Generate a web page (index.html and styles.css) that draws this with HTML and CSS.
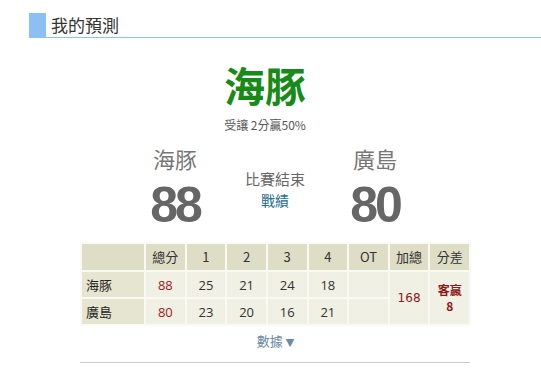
FILE: index.html
```html
<!DOCTYPE html>
<html lang="zh-Hant">
<head>
<meta charset="utf-8">
<title>我的預測</title>
<link rel="stylesheet" href="styles.css">
</head>
<body>
<div class="head">
  <span class="head-mark"></span>
  <span class="head-title">我的預測</span>
</div>

<div class="pick">
  <div class="pick-team">海豚</div>
  <div class="pick-note">受讓 2分贏50%</div>
</div>

<div class="board">
  <div class="team">
    <div class="team-name">海豚</div>
    <div class="team-score">88</div>
  </div>
  <div class="status">
    <div class="status-text">比賽結束</div>
    <a class="status-link">戰績</a>
  </div>
  <div class="team">
    <div class="team-name">廣島</div>
    <div class="team-score">80</div>
  </div>
</div>

<table class="scores">
  <tr class="hrow">
    <th class="c-name"></th>
    <th>總分</th>
    <th>1</th>
    <th>2</th>
    <th>3</th>
    <th>4</th>
    <th>OT</th>
    <th>加總</th>
    <th>分差</th>
  </tr>
  <tr class="brow">
    <td class="c-name">海豚</td>
    <td class="red">88</td>
    <td>25</td>
    <td>21</td>
    <td>24</td>
    <td>18</td>
    <td></td>
    <td class="sum" rowspan="2">168</td>
    <td class="diff" rowspan="2"><span class="diff-a">客贏</span><span class="diff-b">8</span></td>
  </tr>
  <tr class="brow">
    <td class="c-name">廣島</td>
    <td class="red">80</td>
    <td>23</td>
    <td>20</td>
    <td>16</td>
    <td>21</td>
    <td></td>
  </tr>
</table>

<div class="more">數據 <span class="more-arrow">▼</span></div>
<div class="rule"></div>
</body>
</html>
```

FILE: styles.css
```css
body {
  margin: 0;
  background: #fff;
  font-family: "Noto Sans CJK TC", "Noto Sans", sans-serif;
  color: #333;
}

.head {
  display: flex;
  align-items: stretch;
  margin: 13px 0 0 29px;
  height: 24px;
  border-bottom: 1px solid #8cc4e4;
}
.head-mark {
  width: 17px;
  background: #8cc0f4;
}
.head-title {
  margin-left: 5px;
  font-size: 17px;
  line-height: 24px;
  color: #333;
}

.pick {
  margin: 24px 0 0 29px;
  width: 472px;
  text-align: center;
}
.pick-team {
  font-size: 41px;
  line-height: 44px;
  font-weight: bold;
  color: #178a17;
}
.pick-note {
  margin-top: 11px;
  font-size: 12px;
  line-height: 16px;
  color: #555;
}

.board {
  display: flex;
  width: 300px;
  margin: 12px 0 0 125px;
}
.team {
  width: 100px;
  text-align: center;
}
.team-name {
  font-size: 22px;
  line-height: 26px;
  color: #777;
}
.team-score {
  margin-top: 9px;
  font-family: "Liberation Sans", Arial, sans-serif;
  font-weight: bold;
  font-size: 50px;
  line-height: 50px;
  letter-spacing: -3px;
  color: #666;
}
.status {
  width: 100px;
  padding-top: 24px;
  text-align: center;
}
.status-text {
  font-size: 15px;
  line-height: 20px;
  color: #666;
}
.status-link {
  display: block;
  margin-top: 2px;
  font-size: 14px;
  line-height: 18px;
  color: #1f6e8e;
}

.scores {
  margin: 12px 0 0 80px;
  width: 391px;
  border-collapse: collapse;
  border: 1px solid #c6c6bc;
  font-family: "Open Sans", "Noto Sans CJK TC", sans-serif;
  font-size: 13px;
  line-height: 16px;
  color: #333;
  table-layout: fixed;
}
.scores .hrow {
  height: 28px;
}
.scores .brow {
  height: 27px;
}
.scores th,
.scores td {
  border: 2px solid #fafaf4;
  text-align: center;
  padding: 0;
  font-weight: normal;
  background: #f0f0e4;
}
.scores th {
  background: #deddc6;
  font-family: "Noto Sans CJK TC", sans-serif;
}
.scores .c-name {
  width: 58px;
  text-align: left;
  padding-left: 4px;
  background: #e5e5d0;
  font-family: "Noto Sans CJK TC", sans-serif;
  color: #222;
}
.scores .hrow .c-name {
  background: #deddc6;
}
.scores .red {
  color: #a01818;
}
.scores .sum {
  font-family: "DejaVu Sans", sans-serif;
  font-size: 12px;
  color: #8b1a1a;
}
.scores .diff {
  font-family: "Noto Sans CJK TC", sans-serif;
  font-size: 12px;
  font-weight: bold;
  color: #8b1a1a;
}
.diff-a,
.diff-b {
  display: block;
  line-height: 16px;
}

.more {
  margin: 6px 0 0 80px;
  width: 391px;
  text-align: center;
  font-size: 13px;
  line-height: 18px;
  color: #6d8aa6;
}
.more-arrow {
  font-family: "DejaVu Sans", sans-serif;
  font-size: 11px;
}
.rule {
  margin: 10px 0 0 80px;
  width: 390px;
  border-top: 1px solid #ccc;
}
```
